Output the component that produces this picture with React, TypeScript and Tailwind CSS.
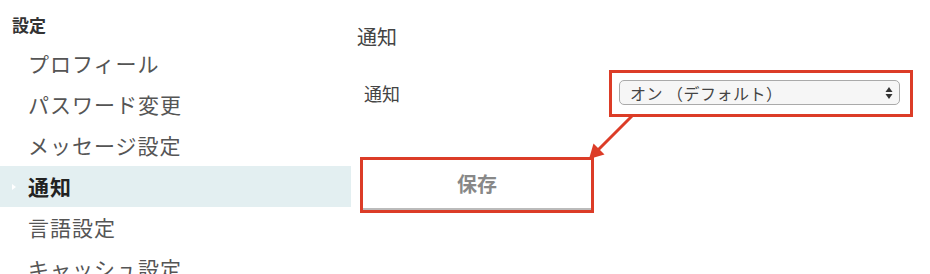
import React from 'react';

const items = ['プロフィール', 'パスワード変更', 'メッセージ設定', '通知', '言語設定', 'キャッシュ設定'];

const App: React.FC = () => {
  return (
    <div
      className="relative flex w-[930px] h-[274px] overflow-hidden bg-white"
      style={{ fontFamily: '"Noto Sans CJK JP", "Noto Sans", sans-serif' }}
    >
      {/* Sidebar */}
      <aside className="w-[351px] shrink-0 pt-[14px]">
        <h2 className="pl-[12px] text-[17px] leading-[22px] font-bold text-[#333]">設定</h2>
        <ul className="mt-[7px]">
          {items.map((item) => {
            const active = item === '通知';
            return (
              <li
                key={item}
                className={
                  active
                    ? 'relative flex items-center h-[41px] pl-[28px] bg-[#e3eff1] text-[21px] tracking-[1px] font-bold text-[#222]'
                    : 'flex items-center h-[41px] pl-[28px] text-[21px] tracking-[1px] text-[#555]'
                }
              >
                {active && (
                  <span className="absolute left-[12px] top-[18px] w-0 h-0 border-y-[3px] border-y-transparent border-l-[4px] border-l-white" />
                )}
                {item}
              </li>
            );
          })}
        </ul>
      </aside>

      {/* Main */}
      <main className="flex-1 pl-[6px] pt-[23px]">
        <h1 className="text-[20px] leading-[28px] text-[#444]">通知</h1>

        <div className="mt-[19px] flex items-center">
          <label className="w-[252px] pl-[7px] text-[18px] text-[#444]">通知</label>
          <div className="w-[304px] h-[47px] border-[3px] border-[#dc3c27] pt-[7px] pl-[7px] pr-[10px]">
            <div className="flex items-center justify-between h-[25px] rounded-[5px] border border-[#aaa] bg-[#f6f6f6] pl-[10px] pr-[6px]">
              <span className="text-[16px] leading-none tracking-[0.5px] text-[#444]">オン （デフォルト）</span>
              <svg width="8" height="14" viewBox="0 0 8 14">
                <path d="M4 1 L7.5 6 L0.5 6 Z" fill="#333" />
                <path d="M4 13 L7.5 8 L0.5 8 Z" fill="#333" />
              </svg>
            </div>
          </div>
        </div>

        <div className="mt-[40px] ml-[3px] w-[234px] h-[56px] border-[3px] border-[#dc3c27]">
          <button className="w-full h-full bg-white border-b-2 border-[#bbb] text-[20px] font-bold text-[#888]">
            保存
          </button>
        </div>
      </main>

      {/* Annotation arrow */}
      <svg className="absolute left-[580px] top-[110px]" width="60" height="55" viewBox="0 0 60 55">
        <line x1="52" y1="6" x2="17" y2="41" stroke="#dc3c27" strokeWidth="3" />
        <polygon points="9,49 24.5,44.5 13.5,33.5" fill="#dc3c27" />
      </svg>
    </div>
  );
};

export default App;
